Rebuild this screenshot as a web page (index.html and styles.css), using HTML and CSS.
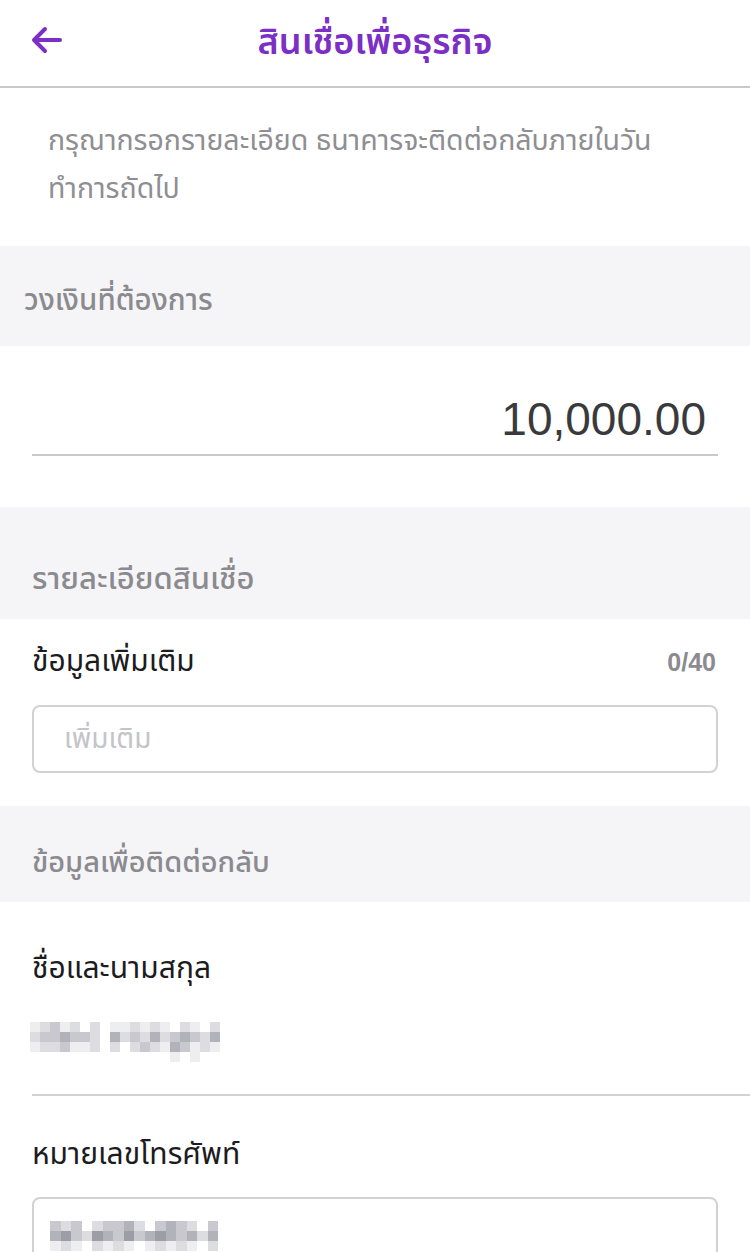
FILE: index.html
```html
<!DOCTYPE html>
<html lang="th">
<head>
    <meta charset="UTF-8">
    <meta name="viewport" content="width=device-width, initial-scale=1.0">
    <title>สินเชื่อเพื่อธุรกิจ</title>
    <link rel="stylesheet" href="styles.css">
</head>
<body>
    <header class="topbar">
        <button class="back" aria-label="back">
            <svg width="34" height="28" viewBox="0 0 34 28">
                <path d="M30 14 H5 M15 3 L4 14 L15 25" fill="none" stroke="#7b2fc4" stroke-width="4" stroke-linecap="round" stroke-linejoin="round"/>
            </svg>
        </button>
        <h1>สินเชื่อเพื่อธุรกิจ</h1>
    </header>

    <p class="intro">กรุณากรอกรายละเอียด ธนาคารจะติดต่อกลับภายในวัน<br>ทำการถัดไป</p>

    <div class="section-head first">วงเงินที่ต้องการ</div>
    <div class="amount-block">
        <div class="amount">10,000.00</div>
    </div>

    <div class="section-head detail">รายละเอียดสินเชื่อ</div>
    <div class="field-block">
        <div class="label-row">
            <span class="label">ข้อมูลเพิ่มเติม</span>
            <span class="counter">0/40</span>
        </div>
        <div class="textbox placeholder">เพิ่มเติม</div>
    </div>

    <div class="section-head contact">ข้อมูลเพื่อติดต่อกลับ</div>
    <div class="contact-block">
        <div class="label">ชื่อและนามสกุล</div>
        <div class="mosaic name">
            <span class="a"></span><span class="b"></span><span class="c"></span><span class="a"></span><span class="b"></span><span class="w"></span><span class="b"></span><span class="w"></span><span class="a"></span><span class="a"></span><span class="b"></span><span class="a"></span><span class="b"></span><span class="a"></span><span class="w"></span><span class="b"></span><span class="a"></span><span class="w"></span><span class="b"></span>
            <span class="b"></span><span class="c"></span><span class="c"></span><span class="d"></span><span class="c"></span><span class="c"></span><span class="b"></span><span class="w"></span><span class="d"></span><span class="b"></span><span class="c"></span><span class="b"></span><span class="d"></span><span class="b"></span><span class="c"></span><span class="d"></span><span class="c"></span><span class="b"></span><span class="d"></span>
            <span class="a"></span><span class="b"></span><span class="b"></span><span class="c"></span><span class="a"></span><span class="a"></span><span class="b"></span><span class="w"></span><span class="b"></span><span class="w"></span><span class="b"></span><span class="c"></span><span class="b"></span><span class="a"></span><span class="d"></span><span class="c"></span><span class="a"></span><span class="b"></span><span class="a"></span>
            <span class="w"></span><span class="w"></span><span class="w"></span><span class="w"></span><span class="w"></span><span class="w"></span><span class="w"></span><span class="w"></span><span class="w"></span><span class="w"></span><span class="w"></span><span class="w"></span><span class="w"></span><span class="w"></span><span class="a"></span><span class="w"></span><span class="a"></span><span class="w"></span><span class="w"></span>
        </div>
        <hr class="divider">
        <div class="label">หมายเลขโทรศัพท์</div>
        <div class="textbox phone">
            <div class="mosaic tel">
                <span class="c"></span><span class="b"></span><span class="c"></span><span class="w"></span><span class="b"></span><span class="c"></span><span class="c"></span><span class="d"></span><span class="b"></span><span class="w"></span><span class="c"></span><span class="d"></span><span class="c"></span><span class="b"></span><span class="w"></span><span class="c"></span>
                <span class="d"></span><span class="e"></span><span class="c"></span><span class="b"></span><span class="e"></span><span class="d"></span><span class="c"></span><span class="e"></span><span class="c"></span><span class="d"></span><span class="e"></span><span class="d"></span><span class="c"></span><span class="d"></span><span class="b"></span><span class="d"></span>
                <span class="a"></span><span class="b"></span><span class="a"></span><span class="w"></span><span class="b"></span><span class="a"></span><span class="b"></span><span class="a"></span><span class="w"></span><span class="a"></span><span class="b"></span><span class="a"></span><span class="b"></span><span class="a"></span><span class="w"></span><span class="b"></span>
            </div>
        </div>
    </div>
</body>
</html>
```

FILE: styles.css
```css
body {
    margin: 0;
    padding: 0;
    background: #fff;
    color: #1c1c1e;
    font-family: "Noto Sans Thai", "Noto Sans", "Liberation Sans", sans-serif;
    overflow: hidden;
}
.topbar {
    height: 86px;
    border-bottom: 2px solid #c8c8cc;
    display: flex;
    align-items: center;
    justify-content: center;
    position: relative;
}
.back {
    position: absolute;
    left: 30px;
    top: 26px;
    border: none;
    background: none;
    padding: 0;
}
.topbar h1 {
    margin: 0;
    font-size: 36px;
    font-weight: 600;
    color: #7b2fc4;
}
.intro {
    margin: 0;
    padding: 30px 40px 32px 48px;
    height: 96px;
    font-size: 28.5px;
    line-height: 48px;
    color: #8e8e93;
    white-space: nowrap;
}
.section-head {
    background: #f5f5f7;
    color: #8a8a8f;
    font-weight: 500;
    padding: 0 32px;
    display: flex;
    align-items: center;
    box-sizing: border-box;
}
.section-head.first {
    height: 100px;
    padding-left: 24px;
    padding-top: 10px;
    font-size: 29.5px;
}
.section-head.detail {
    height: 112px;
    padding-top: 32px;
    font-size: 31px;
}
.section-head.contact {
    height: 96px;
    padding-top: 18px;
    font-size: 29px;
}
.amount-block {
    height: 161px;
    padding: 46px 32px 0;
    box-sizing: border-box;
}
.amount {
    text-align: right;
    font-family: "Liberation Sans", Arial, sans-serif;
    font-size: 46px;
    color: #3a3a3c;
    padding-right: 12px;
    height: 62px;
    border-bottom: 2px solid #c8c8cc;
}
.field-block {
    height: 187px;
    padding: 18px 32px 0;
    box-sizing: border-box;
}
.label-row {
    display: flex;
    justify-content: space-between;
    align-items: center;
    height: 50px;
    margin-bottom: 18px;
}
.label {
    font-size: 30px;
    color: #1c1c1e;
}
.counter {
    font-family: "Liberation Sans", Arial, sans-serif;
    font-size: 25px;
    font-weight: bold;
    color: #8a8a8f;
    padding-right: 2px;
}
.textbox {
    height: 68px;
    border: 2px solid #d1d1d6;
    border-radius: 8px;
    box-sizing: border-box;
    display: flex;
    align-items: center;
    padding: 0 30px;
    font-size: 28px;
}
.placeholder {
    color: #c4c4c8;
}
.contact-block {
    padding: 42px 0 0 32px;
}
.contact-block .label {
    height: 50px;
    display: flex;
    align-items: center;
}
.mosaic {
    display: grid;
    grid-template-columns: repeat(19, 10px);
    grid-auto-rows: 10px;
    margin: 28px 0 0 -2px;
}
.mosaic span {
    display: block;
}
.mosaic .w { background: #ffffff; }
.mosaic .a { background: #eeeef1; }
.mosaic .b { background: #dcdce1; }
.mosaic .c { background: #c8c8ce; }
.mosaic .d { background: #b2b2ba; }
.mosaic .e { background: #9d9da6; }
.divider {
    border: none;
    border-top: 2px solid #d1d1d6;
    margin: 32px 0 0;
}
.contact-block .divider + .label {
    margin-top: 34px;
}
.phone {
    margin: 17px 32px 0 0;
    height: 90px;
    align-items: flex-start;
    padding: 22px 16px;
}
.mosaic.tel {
    grid-template-columns: repeat(16, 10.5px);
    margin: 0;
}
```
